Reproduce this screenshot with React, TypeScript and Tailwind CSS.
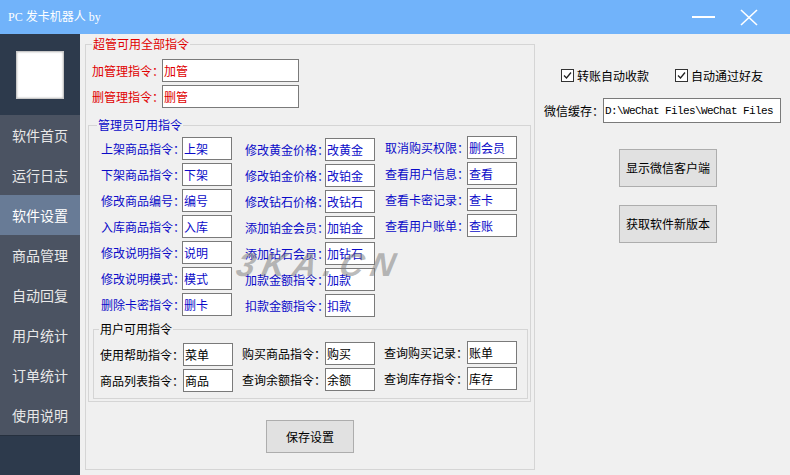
import React from "react";

type Item = { label: string; value: string };

const adminCol1: Item[] = [
  { label: "上架商品指令：", value: "上架" },
  { label: "下架商品指令：", value: "下架" },
  { label: "修改商品编号：", value: "编号" },
  { label: "入库商品指令：", value: "入库" },
  { label: "修改说明指令：", value: "说明" },
  { label: "修改说明模式：", value: "模式" },
  { label: "删除卡密指令：", value: "删卡" },
];

const adminCol2: Item[] = [
  { label: "修改黄金价格：", value: "改黄金" },
  { label: "修改铂金价格：", value: "改铂金" },
  { label: "修改钻石价格：", value: "改钻石" },
  { label: "添加铂金会员：", value: "加铂金" },
  { label: "添加钻石会员：", value: "加钻石" },
  { label: "加款金额指令：", value: "加款" },
  { label: "扣款金额指令：", value: "扣款" },
];

const adminCol3: Item[] = [
  { label: "取消购买权限：", value: "删会员" },
  { label: "查看用户信息：", value: "查看" },
  { label: "查看卡密记录：", value: "查卡" },
  { label: "查看用户账单：", value: "查账" },
];

const userCol1: Item[] = [
  { label: "使用帮助指令：", value: "菜单" },
  { label: "商品列表指令：", value: "商品" },
];
const userCol2: Item[] = [
  { label: "购买商品指令：", value: "购买" },
  { label: "查询余额指令：", value: "余额" },
];
const userCol3: Item[] = [
  { label: "查询购买记录：", value: "账单" },
  { label: "查询库存指令：", value: "库存" },
];

const menu = ["软件首页", "运行日志", "软件设置", "商品管理", "自动回复", "用户统计", "订单统计", "使用说明"];

const Field = ({ item, labelW, color }: { item: Item; labelW: string; color: string }) => (
  <div className={`flex items-center h-[23px] ${color}`}>
    <span className={`shrink-0 whitespace-nowrap overflow-visible ${labelW}`}>{item.label}</span>
    <input
      readOnly
      value={item.value}
      className="w-[50px] h-[23px] shrink-0 px-[1px] bg-white border border-[#7a7a7a] outline-none text-[12px] leading-[21px]"
    />
  </div>
);

const Column = ({ items, labelW, color, extra }: { items: Item[]; labelW: string; color: string; extra: string }) => (
  <div className={`flex flex-col gap-[3px] ${extra}`}>
    {items.map((it) => (
      <Field key={it.label} item={it} labelW={labelW} color={color} />
    ))}
  </div>
);

const CheckBox = ({ label }: { label: string }) => (
  <div className="flex items-center gap-[3px]">
    <span className="w-[13px] h-[13px] border border-[#333] bg-white flex items-center justify-center">
      <svg width="9" height="9" viewBox="0 0 9 9">
        <polyline points="1,4.5 3.5,7 8,1.5" fill="none" stroke="#222" strokeWidth="1.3" />
      </svg>
    </span>
    <span className="whitespace-nowrap">{label}</span>
  </div>
);

const App = () => {
  return (
    <div className="w-[790px] h-[475px] flex flex-col bg-[#f0f0f0] overflow-hidden font-['Microsoft_YaHei','Noto_Sans_CJK_SC',sans-serif] text-[12px] leading-[16px] text-black">
      {/* title bar */}
      <div className="h-[34px] shrink-0 bg-[#71b3fa] flex items-center justify-between text-white">
        <span className="pl-[8px] font-['SimSun','Liberation_Serif','Noto_Sans_CJK_SC',serif] text-[12px]">PC 发卡机器人 by</span>
        <div className="flex items-center h-full">
          <div className="w-[23px] h-[2px] bg-white mr-[25px]" />
          <svg width="18" height="17" viewBox="0 0 18 17" className="mr-[32px]">
            <line x1="1" y1="1" x2="17" y2="16" stroke="#fff" strokeWidth="1.6" />
            <line x1="17" y1="1" x2="1" y2="16" stroke="#fff" strokeWidth="1.6" />
          </svg>
        </div>
      </div>

      <div className="flex flex-1 min-h-0">
        {/* sidebar */}
        <div className="w-[80px] shrink-0 flex flex-col bg-[#2d3a4c]">
          <div className="h-[81px] shrink-0 flex items-start pt-[17px] pl-[16px]">
            <div className="w-[48px] h-[48px] bg-white border border-[#c8c8c8] shadow-[inset_0_0_2px_#aaa]" />
          </div>
          {menu.map((m) => (
            <div
              key={m}
              className={`h-[40px] shrink-0 flex items-center pl-[12px] text-[14px] ${
                m === "软件设置" ? "bg-[#687b96] text-white" : "bg-[#4b5362] text-[#e8e8e8]"
              }`}
            >
              {m}
            </div>
          ))}
          <div className="flex-1 border-t border-[#26303e]" />
        </div>

        {/* main */}
        <div className="flex-1 flex relative">
          {/* left group */}
          <div className="ml-[5px] mt-[10px] w-[450px] h-[426px] shrink-0 border border-[#d5d5d5] relative flex flex-col">
            <span className="absolute left-[6px] top-[-9px] px-[1px] bg-[#f0f0f0] text-[#e00000]">超管可用全部指令</span>

            <div className="pt-[14px] pl-[6px] flex flex-col gap-[3px] text-[#e00000]">
              <div className="flex items-center h-[23px]">
                <span className="w-[70px] shrink-0 whitespace-nowrap">加管理指令：</span>
                <input readOnly value="加管" className="w-[137px] h-[23px] px-[1px] bg-white border border-[#7a7a7a] outline-none text-[12px]" />
              </div>
              <div className="flex items-center h-[23px]">
                <span className="w-[70px] shrink-0 whitespace-nowrap">删管理指令：</span>
                <input readOnly value="删管" className="w-[137px] h-[23px] px-[1px] bg-white border border-[#7a7a7a] outline-none text-[12px]" />
              </div>
            </div>

            {/* admin group */}
            <div className="ml-[2px] mt-[17px] w-[443px] h-[277px] border border-[#d5d5d5] relative flex flex-col">
              <span className="absolute left-[8px] top-[-9px] px-[1px] bg-[#f0f0f0] text-[#0a0ac8]">管理员可用指令</span>
              <div className="h-[203px] shrink-0 pt-[10px] pl-[12px] flex items-start">
                <Column items={adminCol1} labelW="w-[81px]" color="text-[#0a0ac8]" extra="mt-[1px]" />
                <Column items={adminCol2} labelW="w-[80px]" color="text-[#0a0ac8]" extra="ml-[13px] mt-[2px]" />
                <Column items={adminCol3} labelW="w-[82px]" color="text-[#0a0ac8]" extra="ml-[10px]" />
              </div>

              {/* user group */}
              <div className="ml-[4px] w-[435px] h-[70px] border border-[#d5d5d5] relative">
                <span className="absolute left-[5px] top-[-9px] px-[1px] bg-[#f0f0f0]">用户可用指令</span>
                <div className="pt-[11px] pl-[6px] flex items-start">
                  <Column items={userCol1} labelW="w-[83px]" color="text-black" extra="mt-[2px]" />
                  <Column items={userCol2} labelW="w-[83px]" color="text-black" extra="ml-[9px] mt-[1px]" />
                  <Column items={userCol3} labelW="w-[83px]" color="text-black" extra="ml-[9px]" />
                </div>
              </div>
            </div>

            <div className="mt-[18px] flex justify-center">
              <button className="w-[88px] h-[33px] bg-[#e1e1e1] border border-[#adadad] text-[12px]">保存设置</button>
            </div>
          </div>

          {/* right panel */}
          <div className="flex-1 flex flex-col">
            <div className="mt-[35px] ml-[26px] flex items-center h-[13px]">
              <CheckBox label="转账自动收款" />
              <div className="ml-[26px]">
                <CheckBox label="自动通过好友" />
              </div>
            </div>
            <div className="mt-[16px] ml-[9px] flex items-center">
              <span className="w-[59px] shrink-0 whitespace-nowrap">微信缓存：</span>
              <input
                readOnly
                value="D:\WeChat Files\WeChat Files"
                className="w-[178px] h-[25px] px-[1px] bg-white border border-[#7a7a7a] outline-none font-['Liberation_Mono',monospace] text-[11px] tracking-[-0.6px]"
              />
            </div>
            <button className="mt-[26px] ml-[84px] w-[98px] h-[38px] bg-[#e1e1e1] border border-[#adadad] text-[12px]">显示微信客户端</button>
            <button className="mt-[18px] ml-[84px] w-[98px] h-[38px] bg-[#e1e1e1] border border-[#adadad] text-[12px]">获取软件新版本</button>
          </div>

          {/* watermark */}
          <div className="absolute left-[157px] top-[214px] pointer-events-none select-none text-[33px] leading-[34px] font-black italic tracking-[7px] text-[#808080]/55 font-['Liberation_Sans',sans-serif] -skew-x-12">
            3KA.CN
          </div>
        </div>
      </div>
    </div>
  );
};

export default App;
